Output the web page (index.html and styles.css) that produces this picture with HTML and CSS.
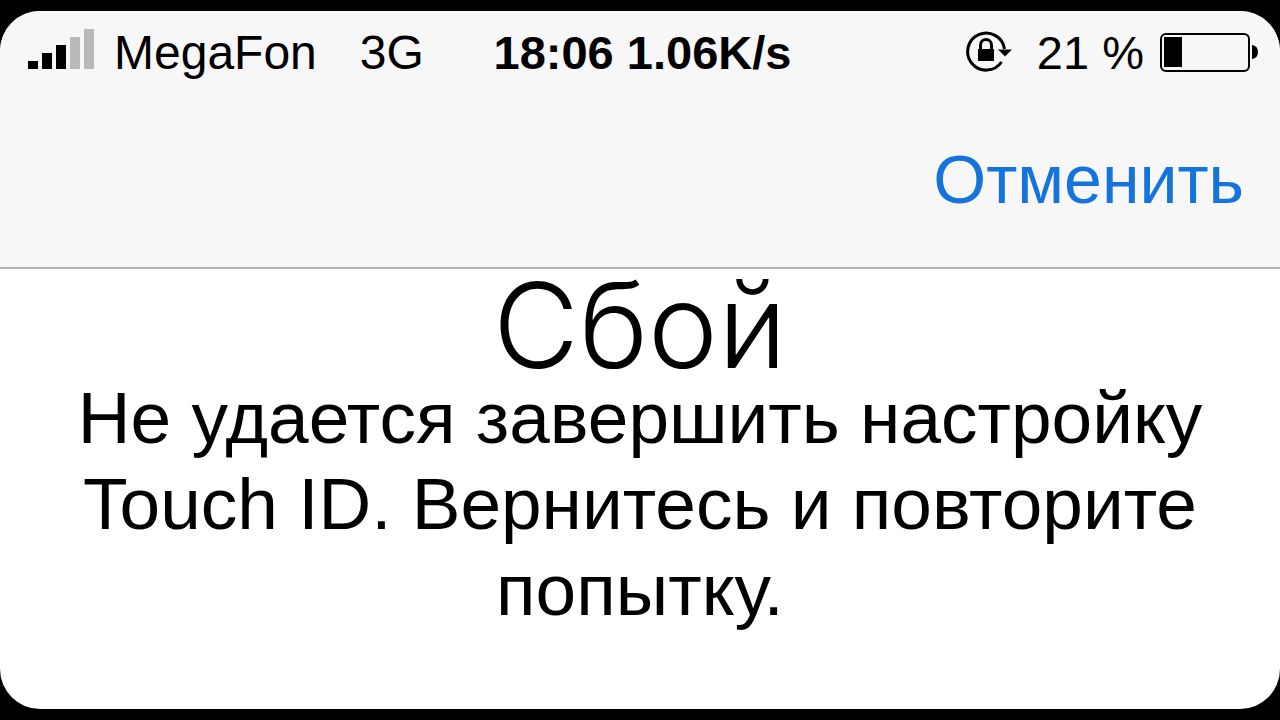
FILE: index.html
```html
<!DOCTYPE html>
<html lang="ru">
<head>
<meta charset="utf-8">
<meta name="viewport" content="width=device-width, initial-scale=1">
<title>Touch ID</title>
<link rel="stylesheet" href="styles.css">
</head>
<body>
<div class="screen">
  <header class="top">
    <div class="status">
      <div class="carrier">
        <svg class="signal" width="68" height="50" viewBox="0 0 68 50" aria-hidden="true">
          <path d="M1 33h10v8H1zM15 25h10v16H15zM29 17h10v24H29z" fill="#000"/>
          <path d="M43 9h10v32H43zM57 1h10v40H57z" fill="#b9b9b9"/>
        </svg>
        <span>MegaFon</span>
        <span class="network">3G</span>
      </div>
      <div class="clock">18:06 1.06K/s</div>
      <div class="power">
        <svg class="lock" width="48" height="44" viewBox="0 0 48 44" aria-hidden="true">
          <path d="M36.500 31A18.500 18.500 0 1 1 39.500 18" fill="none" stroke="#000" stroke-width="3"/>
          <path d="M33 18.500h14l-7 7z"/>
          <path d="M13 18h16v12H13z"/>
          <path d="M15.500 19v-5a5.500 5.500 0 0 1 11 0v5" fill="none" stroke="#000" stroke-width="3"/>
        </svg>
        <span>21 %</span>
        <svg class="battery" width="98" height="40" viewBox="0 0 98 40" aria-hidden="true">
          <rect x="1" y="1" width="88" height="37" rx="5" fill="none" stroke="#000" stroke-width="2"/>
          <path d="M4 4h18v30H4zM92 12q6 1 6 7t-6 7z"/>
        </svg>
      </div>
    </div>
    <nav class="bar"><button class="cancel" type="button">Отменить</button></nav>
  </header>
  <main class="content">
    <h1 class="title">Сбой</h1>
    <p class="message">Не удается завершить настройку Touch ID. Вернитесь и повторите попытку.</p>
  </main>
</div>
</body>
</html>
```
FILE: styles.css
```css
* { box-sizing: border-box; }
body {
  margin: 0;
  min-height: 100vh;
  padding: 11px 0;
  display: flex;
  background: #000;
  color: #000;
  font-family: "Liberation Sans", Arial, sans-serif;
}
.screen {
  flex: 1;
  border-radius: 40px;
  overflow: hidden;
  background: #fff;
}
.top {
  background: #f7f7f7;
  border-bottom: 2px solid #b4b4b4;
}
.status {
  display: grid;
  grid-template-columns: 1fr auto 1fr;
  align-items: center;
  height: 84px;
  padding: 0 22px 0 27px;
  font-size: 48px;
  line-height: 56px;
  white-space: nowrap;
}
.carrier, .power { display: flex; align-items: center; }
.carrier { gap: 19px; }
.network { margin-left: 24px; }
.clock { font-weight: bold; font-size: 47px; }
.power { justify-content: flex-end; gap: 16px; font-size: 47px; }
.lock { margin-right: 8px; }
.bar {
  display: flex;
  justify-content: flex-end;
  padding: 44px 36px 48px;
}
.cancel {
  border: 0;
  padding: 0;
  background: none;
  color: #1474dc;
  font: 68px/80px "Liberation Sans", Arial, sans-serif;
}
.content {
  padding: 6px 48px 0;
  text-align: center;
}
.title {
  margin: 0;
  font-family: Inter, "Liberation Sans", sans-serif;
  font-size: 118px;
  line-height: 100px;
  font-weight: 300;
}
.message {
  margin: 0;
  font-size: 73px;
  line-height: 86px;
}
```
